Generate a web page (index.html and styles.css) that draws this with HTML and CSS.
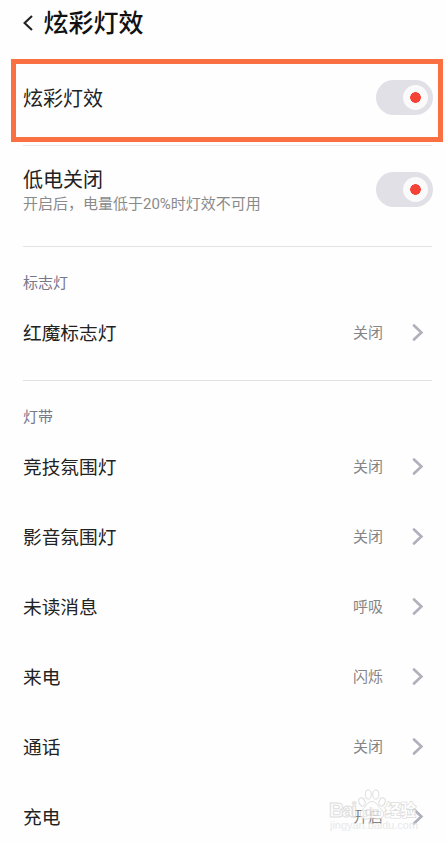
FILE: index.html
```
<!DOCTYPE html>
<html lang="zh-CN">
<head>
    <meta charset="UTF-8">
    <meta name="viewport" content="width=device-width, initial-scale=1.0">
    <title>炫彩灯效</title>
    <link rel="stylesheet" href="styles.css">
</head>
<body>
    <svg width="0" height="0" class="defs">
        <symbol id="arrow" viewBox="0 0 12 18">
            <path d="M2 2.5 L9.4 9.5 L2 16.5" fill="none" stroke="#b0b0bd" stroke-width="2.6" stroke-linecap="round"/>
        </symbol>
    </svg>

    <header class="header">
        <svg class="back" viewBox="0 0 12 18"><path d="M10 2 L2.6 9 L10 16" fill="none" stroke="#222" stroke-width="2.1"/></svg>
        <h1>炫彩灯效</h1>
    </header>

    <div class="switch-row highlight">
        <span class="title">炫彩灯效</span>
        <span class="switch"><i></i></span>
    </div>

    <div class="switch-row low-power">
        <div>
            <div class="title">低电关闭</div>
            <div class="desc">开启后，电量低于20%时灯效不可用</div>
        </div>
        <span class="switch"><i></i></span>
    </div>

    <section class="group">
        <h2>标志灯</h2>
        <div class="row"><span class="name">红魔标志灯</span><span class="value">关闭</span><svg class="arrow"><use href="#arrow"/></svg></div>
    </section>

    <section class="group">
        <h2>灯带</h2>
        <div class="row"><span class="name">竞技氛围灯</span><span class="value">关闭</span><svg class="arrow"><use href="#arrow"/></svg></div>
        <div class="row"><span class="name">影音氛围灯</span><span class="value">关闭</span><svg class="arrow"><use href="#arrow"/></svg></div>
        <div class="row"><span class="name">未读消息</span><span class="value">呼吸</span><svg class="arrow"><use href="#arrow"/></svg></div>
        <div class="row"><span class="name">来电</span><span class="value">闪烁</span><svg class="arrow"><use href="#arrow"/></svg></div>
        <div class="row"><span class="name">通话</span><span class="value">关闭</span><svg class="arrow"><use href="#arrow"/></svg></div>
        <div class="row"><span class="name">充电</span><span class="value">开启</span><svg class="arrow"><use href="#arrow"/></svg></div>
    </section>

    <!-- 水印 -->
    <svg class="watermark" viewBox="0 0 96 50">
        <g class="wm-shape">
            <text x="3" y="32" class="wm-logo" textLength="28">Bai</text>
            <text x="59" y="31" class="wm-cn">经验</text>
            <ellipse cx="36" cy="17" rx="3" ry="4.2" transform="rotate(-20 36 17)"/>
            <ellipse cx="42.3" cy="9.5" rx="3" ry="4.6"/>
            <ellipse cx="49.8" cy="9.5" rx="3" ry="4.6"/>
            <ellipse cx="56" cy="17" rx="3" ry="4.2" transform="rotate(20 56 17)"/>
            <path d="M46 16.5 C41.5 16.5 40.5 21 37.5 23.5 C32 28 34 34 40 34 C43 34 43.5 33 46 33 C48.5 33 49 34 52 34 C58 34 60 28 54.5 23.5 C51 21 50.5 16.5 46 16.5 Z"/>
        </g>
        <text x="38.5" y="31" class="wm-du" textLength="15">du</text>
        <text x="4" y="43.5" class="wm-url" textLength="88" lengthAdjust="spacingAndGlyphs">jingyan.baidu.com</text>
    </svg>
</body>
</html>
```

FILE: styles.css
```
* {
    box-sizing: border-box;
}

body {
    margin: 0;
    height: 843px;
    position: relative;
    overflow: hidden;
    background: #fefefe;
    color: #222;
    font-family: Roboto, "Noto Sans CJK SC", sans-serif;
}

.defs {
    position: absolute;
}

.header {
    display: flex;
    align-items: center;
    height: 46px;
    margin-bottom: 13px;
    padding-left: 22px;
}

.back {
    width: 12px;
    height: 18px;
    margin-right: 9.5px;
}

h1 {
    margin: 0;
    padding-top: 2px;
    font-size: 25px;
    font-weight: 500;
    line-height: 36px;
    color: #111;
}

.switch-row {
    display: flex;
    align-items: center;
    justify-content: space-between;
}

.highlight {
    height: 83px;
    margin: 0 3px 3px 11px;
    padding: 0 5px 6px 7px;
    border: 5px solid #fa7043;
}

.low-power {
    height: 102px;
    margin: 0 14px 0 23px;
    padding-bottom: 13px;
    border-top: 1px solid #e8e8ea;
    border-bottom: 1px solid #e4e4e6;
}

.low-power .switch {
    margin-right: -1px;
}

.title {
    font-size: 20px;
    line-height: 26px;
}

.highlight .title {
    padding-top: 2px;
}

.low-power .title {
    padding-top: 3px;
}

.desc {
    font-size: 15px;
    line-height: 22px;
    color: #8a8a8a;
}

.switch {
    display: flex;
    align-items: center;
    justify-content: flex-end;
    width: 57px;
    height: 35px;
    padding-right: 5px;
    border-radius: 18px;
    background: #e1e0e7;
}

.switch i {
    width: 25px;
    height: 25px;
    border-radius: 50%;
    background: radial-gradient(circle, #f44336 5px, #fafafa 5.6px);
}

.group {
    margin: 0 14px 0 23px;
    padding-bottom: 13px;
    border-bottom: 1px solid #e2e2e4;
}

.group:last-of-type {
    border-bottom: none;
}

h2 {
    height: 50px;
    margin: 0;
    padding-top: 26px;
    font-size: 15px;
    font-weight: 400;
    line-height: 20px;
    color: #77778c;
}

.row {
    display: flex;
    align-items: center;
    height: 70px;
}

.name {
    flex: 1;
    padding-bottom: 2px;
    font-size: 18.7px;
}

.value {
    margin-right: 29px;
    padding-bottom: 1px;
    font-size: 15px;
    color: #858585;
}

.arrow {
    width: 12px;
    height: 18px;
    margin-right: 8px;
}

.watermark {
    position: absolute;
    left: 326px;
    top: 785px;
    width: 96px;
    height: 50px;
    opacity: 0.8;
}

.wm-shape {
    fill: #fff;
    stroke: #d6d6d6;
    stroke-width: 1;
}

.wm-logo {
    font: bold 21px "Liberation Sans", sans-serif;
}

.wm-cn {
    font: bold 15.5px "Noto Sans CJK SC", sans-serif;
    stroke-width: 1.6;
    paint-order: stroke;
}

.wm-url {
    font: 11px "Liberation Sans", sans-serif;
    fill: #e4e4e4;
}

.wm-du {
    font: bold 13px "Liberation Sans", sans-serif;
    fill: #dcdcdc;
}
```
